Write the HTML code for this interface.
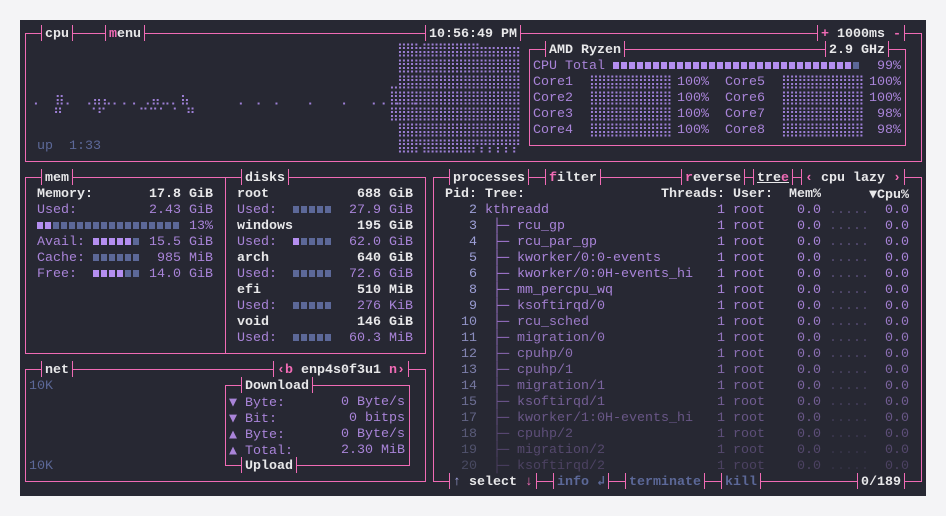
<!DOCTYPE html>
<html><head><meta charset="utf-8"><style>
html,body{margin:0;padding:0;background:#f4f4f6;}
body{width:946px;height:516px;position:relative;overflow:hidden;font-family:"Liberation Mono","DejaVu Sans Mono",monospace;font-size:13.33px;}
#term{position:absolute;left:20px;top:20px;width:906px;height:476px;background:#272833;}
#root{position:absolute;left:0;top:0;width:946px;height:516px;}
.b{position:absolute;border:1px solid #f06bb5;box-sizing:border-box;}
.t{position:absolute;height:16px;line-height:20px;background:#272833;border-left:1px solid #f06bb5;border-right:1px solid #f06bb5;padding:0 3px;white-space:pre;color:#e8e8ea;font-weight:bold;box-sizing:content-box;overflow:hidden;}
.s{position:absolute;white-space:pre;line-height:16px;height:16px;transform:translateY(2px);}
.W{color:#e8e8ea;font-weight:bold}
.V{color:#a984d9}
.G{color:#5c6898}
.P{color:#f06bb5}
.br{font-family:"DejaVu Sans Mono",monospace;color:#9d7fd6;letter-spacing:-1.6px;}
.sq{font-family:"DejaVu Sans Mono",monospace;}
.pr{position:absolute;left:0;width:946px;height:16px;color:#a984d9;transform:translateY(2px);}
.pr span{position:absolute;white-space:pre;line-height:16px;}
.tr{font-family:"DejaVu Sans Mono",monospace;color:#9b72c8}
.dt{color:#5a4f78}
.gd{color:#9ea0d8}
.bv,.bg{position:absolute;height:7px;}
.bv{background:repeating-linear-gradient(90deg,#b48ef0 0 6px,transparent 6px 8px);}
.bg{background:repeating-linear-gradient(90deg,#5c6898 0 6px,transparent 6px 8px);}
</style></head><body>
<div id="term"></div>
<div id="root">
<!-- boxes -->
<div class="b" style="left:25px;top:33px;width:897px;height:129px"></div>
<div class="b" style="left:529px;top:49px;width:377px;height:97px"></div>
<div class="b" style="left:25px;top:177px;width:401px;height:177px"></div>
<div style="position:absolute;left:225px;top:177px;width:1px;height:176px;background:#f06bb5"></div>
<div class="b" style="left:25px;top:369px;width:401px;height:113px"></div>
<div class="b" style="left:225px;top:385px;width:185px;height:81px"></div>
<div class="b" style="left:433px;top:177px;width:489px;height:305px"></div>

<!-- titles -->
<div class="t" style="left:41px;top:25px">cpu</div>
<div class="t" style="left:105px;top:25px"><span class="P">m</span>enu</div>
<div class="t" style="left:425px;top:25px">10:56:49 PM</div>
<div class="t" style="left:817px;top:25px"><span class="P">+</span> 1000ms <span class="P">-</span></div>
<div class="t" style="left:545px;top:41px">AMD Ryzen</div>
<div class="t" style="left:825px;top:41px">2.9 GHz</div>
<div class="t" style="left:41px;top:169px">mem</div>
<div class="t" style="left:241px;top:169px">disks</div>
<div class="t" style="left:449px;top:169px">processes</div>
<div class="t" style="left:545px;top:169px"><span class="P">f</span>ilter</div>
<div class="t" style="left:681px;top:169px"><span class="P">r</span>everse</div>
<div class="t" style="left:753px;top:169px"><u>tre<span class="P">e</span></u></div>
<div class="t" style="left:801px;top:169px"><span class="P">‹</span> cpu lazy <span class="P">›</span></div>
<div class="t" style="left:41px;top:361px">net</div>
<div class="t" style="left:273px;top:361px"><span class="P">‹b</span> enp4s0f3u1 <span class="P">n›</span></div>
<div class="t" style="left:241px;top:377px">Download</div>
<div class="t" style="left:241px;top:457px">Upload</div>
<div class="t" style="left:449px;top:473px"><span class="gd">↑</span> select <span class="P">↓</span></div>
<div class="t" style="left:553px;top:473px"><span class="G">info ↲</span></div>
<div class="t" style="left:625px;top:473px"><span class="G">terminate</span></div>
<div class="t" style="left:721px;top:473px"><span class="G">kill</span></div>
<div class="t" style="left:857px;top:473px">0/189</div>

<!-- cpu graph -->
<div class="s br" style="left:397px;top:41px">⣿⣿⣷⣿⣿⣿⣿⣿⣿⣿⣶⣶⣶⣶⣶</div>
<div class="s br" style="left:397px;top:57px">⣿⣿⣿⣿⣿⣿⣿⣿⣿⣿⣿⣿⣿⣿⣿</div>
<div class="s br" style="left:389px;top:73px">⣀⣿⣿⣿⣿⣿⣿⣿⣿⣿⣿⣿⣿⣿⣿⣿</div>
<div class="s br" style="left:389px;top:89px">⣿⣿⣿⣿⣿⣿⣿⣿⣿⣿⣿⣿⣿⣿⣿⣿</div>
<div class="s br" style="left:389px;top:105px">⣿⣿⣿⣿⣿⣿⣿⣿⣿⣿⣿⣿⣿⣿⣿⣿</div>
<div class="s br" style="left:397px;top:121px">⣿⣿⣿⣿⣿⣿⣿⣿⣿⣿⣿⣿⣿⣿⣿</div>
<div class="s br" style="left:397px;top:137px">⣿⣿⡟⣿⣿⣿⣿⣿⣿⡟⡟⡟⡟⡟⡟</div>
<div class="s br" style="left:29px;top:89px;letter-spacing:0">⢀  ⣶⡀ ⢀⣤⣄⡀⡀⡀⢀⣤⣀⡀⣦      ⡀ ⡀ ⡀   ⡀   ⡀  ⢀⢀ ⡀ ⡀</div>
<div class="s br" style="left:29px;top:105px;letter-spacing:0">   ⠛   ⠈⠋    ⠉⠉⠁⠈ ⠛</div>
<div class="s G" style="left:37px;top:137px">up  1:33</div>

<!-- cpu info -->
<div class="s V" style="left:533px;top:57px">CPU Total</div>
<div class="bv" style="left:613px;top:62px;width:240px"></div><div class="bg" style="left:853px;top:62px;width:8px"></div>
<div class="s V" style="left:877px;top:57px">99%</div>

<div class="s V" style="left:533px;top:73px">Core1</div><div class="s br" style="left:589px;top:73px">⣿⣿⣿⣿⣿⣿⣿⣿⣿⣿</div><div class="s V" style="left:677px;top:73px">100%</div>
<div class="s V" style="left:725px;top:73px">Core5</div><div class="s br" style="left:781px;top:73px">⣿⣿⣿⣿⣿⣿⣿⣿⣿⣿</div><div class="s V" style="left:869px;top:73px">100%</div>
<div class="s V" style="left:533px;top:89px">Core2</div><div class="s br" style="left:589px;top:89px">⣿⣿⣿⣿⣿⣿⣿⣿⣿⣿</div><div class="s V" style="left:677px;top:89px">100%</div>
<div class="s V" style="left:725px;top:89px">Core6</div><div class="s br" style="left:781px;top:89px">⣿⣿⣿⣿⣿⣿⣿⣿⣿⣿</div><div class="s V" style="left:869px;top:89px">100%</div>
<div class="s V" style="left:533px;top:105px">Core3</div><div class="s br" style="left:589px;top:105px">⣿⣿⣿⣿⣿⣿⣿⣿⣿⣿</div><div class="s V" style="left:677px;top:105px">100%</div>
<div class="s V" style="left:725px;top:105px">Core7</div><div class="s br" style="left:781px;top:105px">⣿⣿⣿⣿⣿⣿⣿⣿⣿⣿</div><div class="s V" style="left:877px;top:105px">98%</div>
<div class="s V" style="left:533px;top:121px">Core4</div><div class="s br" style="left:589px;top:121px">⣿⣿⣿⣿⣿⣿⣿⣿⣿⣿</div><div class="s V" style="left:677px;top:121px">100%</div>
<div class="s V" style="left:725px;top:121px">Core8</div><div class="s br" style="left:781px;top:121px">⣿⣿⣿⣿⣿⣿⣿⣿⣿⣿</div><div class="s V" style="left:877px;top:121px">98%</div>

<!-- mem -->
<div class="s W" style="left:37px;top:185px">Memory:</div><div class="s W" style="left:149px;top:185px">17.8 GiB</div>
<div class="s V" style="left:37px;top:201px">Used:</div><div class="s V" style="left:149px;top:201px">2.43 GiB</div>
<div class="bv" style="left:37px;top:222px;width:16px"></div><div class="bg" style="left:53px;top:222px;width:128px"></div><div class="s V" style="left:189px;top:217px">13%</div>
<div class="s V" style="left:37px;top:233px">Avail:</div><div class="bv" style="left:93px;top:238px;width:40px"></div><div class="bg" style="left:133px;top:238px;width:8px"></div><div class="s V" style="left:149px;top:233px">15.5 GiB</div>
<div class="s V" style="left:37px;top:249px">Cache:</div><div class="bg" style="left:93px;top:254px;width:48px"></div><div class="s V" style="left:157px;top:249px">985 MiB</div>
<div class="s V" style="left:37px;top:265px">Free:</div><div class="bv" style="left:93px;top:270px;width:32px"></div><div class="bg" style="left:125px;top:270px;width:16px"></div><div class="s V" style="left:149px;top:265px">14.0 GiB</div>

<!-- disks -->
<div class="s W" style="left:237px;top:185px">root</div><div class="s W" style="left:357px;top:185px">688 GiB</div>
<div class="s V" style="left:237px;top:201px">Used:</div><div class="bg" style="left:293px;top:206px;width:40px"></div><div class="s V" style="left:349px;top:201px">27.9 GiB</div>
<div class="s W" style="left:237px;top:217px">windows</div><div class="s W" style="left:357px;top:217px">195 GiB</div>
<div class="s V" style="left:237px;top:233px">Used:</div><div class="bv" style="left:293px;top:238px;width:8px"></div><div class="bg" style="left:301px;top:238px;width:32px"></div><div class="s V" style="left:349px;top:233px">62.0 GiB</div>
<div class="s W" style="left:237px;top:249px">arch</div><div class="s W" style="left:357px;top:249px">640 GiB</div>
<div class="s V" style="left:237px;top:265px">Used:</div><div class="bg" style="left:293px;top:270px;width:40px"></div><div class="s V" style="left:349px;top:265px">72.6 GiB</div>
<div class="s W" style="left:237px;top:281px">efi</div><div class="s W" style="left:357px;top:281px">510 MiB</div>
<div class="s V" style="left:237px;top:297px">Used:</div><div class="bg" style="left:293px;top:302px;width:40px"></div><div class="s V" style="left:357px;top:297px">276 KiB</div>
<div class="s W" style="left:237px;top:313px">void</div><div class="s W" style="left:357px;top:313px">146 GiB</div>
<div class="s V" style="left:237px;top:329px">Used:</div><div class="bg" style="left:293px;top:334px;width:40px"></div><div class="s V" style="left:349px;top:329px">60.3 MiB</div>

<!-- net -->
<div class="s G" style="left:29px;top:377px">10K</div>
<div class="s G" style="left:29px;top:457px">10K</div>
<div class="s V" style="left:229px;top:393px"><span class="sq">▼</span> Byte:</div><div class="s V" style="left:341px;top:393px">0 Byte/s</div>
<div class="s V" style="left:229px;top:409px"><span class="sq">▼</span> Bit:</div><div class="s V" style="left:349px;top:409px">0 bitps</div>
<div class="s V" style="left:229px;top:425px"><span class="sq">▲</span> Byte:</div><div class="s V" style="left:341px;top:425px">0 Byte/s</div>
<div class="s V" style="left:229px;top:441px"><span class="sq">▲</span> Total:</div><div class="s V" style="left:341px;top:441px">2.30 MiB</div>

<!-- processes header -->
<div class="s W" style="left:445px;top:185px">Pid:</div>
<div class="s W" style="left:485px;top:185px">Tree:</div>
<div class="s W" style="left:661px;top:185px">Threads:</div>
<div class="s W" style="left:733px;top:185px">User:</div>
<div class="s W" style="left:789px;top:185px">Mem%</div>
<div class="s W" style="left:869px;top:185px"><span class="sq">▼</span>Cpu%</div>

<div class="pr" style="top:201px"><span class="gd" style="left:453px">  2</span><span style="left:485px">kthreadd</span><span style="left:717px">1 root</span><span style="left:797px">0.0</span><span class="dt" style="left:829px">.....</span><span style="left:885px">0.0</span></div>
<div class="pr" style="top:217px"><span class="gd" style="left:453px">  3</span><span class="tr" style="left:493px">├─</span><span style="left:517px">rcu_gp</span><span style="left:717px">1 root</span><span style="left:797px">0.0</span><span class="dt" style="left:829px">.....</span><span style="left:885px">0.0</span></div>
<div class="pr" style="top:233px"><span class="gd" style="left:453px">  4</span><span class="tr" style="left:493px">├─</span><span style="left:517px">rcu_par_gp</span><span style="left:717px">1 root</span><span style="left:797px">0.0</span><span class="dt" style="left:829px">.....</span><span style="left:885px">0.0</span></div>
<div class="pr" style="top:249px"><span class="gd" style="left:453px">  5</span><span class="tr" style="left:493px">├─</span><span style="left:517px">kworker/0:0-events</span><span style="left:717px">1 root</span><span style="left:797px">0.0</span><span class="dt" style="left:829px">.....</span><span style="left:885px">0.0</span></div>
<div class="pr" style="top:265px"><span class="gd" style="left:453px">  6</span><span class="tr" style="left:493px">├─</span><span style="left:517px">kworker/0:0H-events_hi</span><span style="left:717px">1 root</span><span style="left:797px">0.0</span><span class="dt" style="left:829px">.....</span><span style="left:885px">0.0</span></div>
<div class="pr" style="top:281px"><span class="gd" style="left:453px">  8</span><span class="tr" style="left:493px">├─</span><span style="left:517px">mm_percpu_wq</span><span style="left:717px">1 root</span><span style="left:797px">0.0</span><span class="dt" style="left:829px">.....</span><span style="left:885px">0.0</span></div>
<div class="pr" style="top:297px;opacity:.95"><span class="gd" style="left:453px">  9</span><span class="tr" style="left:493px">├─</span><span style="left:517px">ksoftirqd/0</span><span style="left:717px">1 root</span><span style="left:797px">0.0</span><span class="dt" style="left:829px">.....</span><span style="left:885px">0.0</span></div>
<div class="pr" style="top:313px;opacity:.9"><span class="gd" style="left:453px"> 10</span><span class="tr" style="left:493px">├─</span><span style="left:517px">rcu_sched</span><span style="left:717px">1 root</span><span style="left:797px">0.0</span><span class="dt" style="left:829px">.....</span><span style="left:885px">0.0</span></div>
<div class="pr" style="top:329px;opacity:.84"><span class="gd" style="left:453px"> 11</span><span class="tr" style="left:493px">├─</span><span style="left:517px">migration/0</span><span style="left:717px">1 root</span><span style="left:797px">0.0</span><span class="dt" style="left:829px">.....</span><span style="left:885px">0.0</span></div>
<div class="pr" style="top:345px;opacity:.78"><span class="gd" style="left:453px"> 12</span><span class="tr" style="left:493px">├─</span><span style="left:517px">cpuhp/0</span><span style="left:717px">1 root</span><span style="left:797px">0.0</span><span class="dt" style="left:829px">.....</span><span style="left:885px">0.0</span></div>
<div class="pr" style="top:361px;opacity:.72"><span class="gd" style="left:453px"> 13</span><span class="tr" style="left:493px">├─</span><span style="left:517px">cpuhp/1</span><span style="left:717px">1 root</span><span style="left:797px">0.0</span><span class="dt" style="left:829px">.....</span><span style="left:885px">0.0</span></div>
<div class="pr" style="top:377px;opacity:.65"><span class="gd" style="left:453px"> 14</span><span class="tr" style="left:493px">├─</span><span style="left:517px">migration/1</span><span style="left:717px">1 root</span><span style="left:797px">0.0</span><span class="dt" style="left:829px">.....</span><span style="left:885px">0.0</span></div>
<div class="pr" style="top:393px;opacity:.58"><span class="gd" style="left:453px"> 15</span><span class="tr" style="left:493px">├─</span><span style="left:517px">ksoftirqd/1</span><span style="left:717px">1 root</span><span style="left:797px">0.0</span><span class="dt" style="left:829px">.....</span><span style="left:885px">0.0</span></div>
<div class="pr" style="top:409px;opacity:.5"><span class="gd" style="left:453px"> 17</span><span class="tr" style="left:493px">├─</span><span style="left:517px">kworker/1:0H-events_hi</span><span style="left:717px">1 root</span><span style="left:797px">0.0</span><span class="dt" style="left:829px">.....</span><span style="left:885px">0.0</span></div>
<div class="pr" style="top:425px;opacity:.42"><span class="gd" style="left:453px"> 18</span><span class="tr" style="left:493px">├─</span><span style="left:517px">cpuhp/2</span><span style="left:717px">1 root</span><span style="left:797px">0.0</span><span class="dt" style="left:829px">.....</span><span style="left:885px">0.0</span></div>
<div class="pr" style="top:441px;opacity:.35"><span class="gd" style="left:453px"> 19</span><span class="tr" style="left:493px">├─</span><span style="left:517px">migration/2</span><span style="left:717px">1 root</span><span style="left:797px">0.0</span><span class="dt" style="left:829px">.....</span><span style="left:885px">0.0</span></div>
<div class="pr" style="top:457px;opacity:.28"><span class="gd" style="left:453px"> 20</span><span class="tr" style="left:493px">├─</span><span style="left:517px">ksoftirqd/2</span><span style="left:717px">1 root</span><span style="left:797px">0.0</span><span class="dt" style="left:829px">.....</span><span style="left:885px">0.0</span></div>
</div>
</body></html>
